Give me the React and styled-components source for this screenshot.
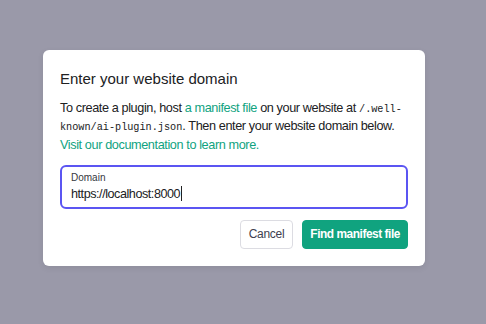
import React from "react"
import styled, { createGlobalStyle } from "styled-components"

const Global = createGlobalStyle`
body{
    margin:0;
    background:#9a99a9;
    font-family: "Liberation Sans", Arial, sans-serif;
}
`

const Page = styled.div`
width:486px;
height:324px;
box-sizing:border-box;
padding:50px 0 0 43px;
`

const Modal = styled.div`
width:382px;
box-sizing:border-box;
background:#fff;
border-radius:6px;
padding:20px 17px 17px 17px;
box-shadow:0 2px 6px rgba(0,0,0,0.08);
`

const Title = styled.h2`
margin:0;
font-size:15px;
line-height:18px;
font-weight:400;
color:#202123;
`

const Text = styled.p`
margin:12px 0 0;
font-size:12.7px;
line-height:17.3px;
letter-spacing:-0.4px;
color:#202123;
a{
    color:#10a37f;
    text-decoration:none;
}
code{
    font-family:"Liberation Mono", monospace;
    font-size:10.2px;
    letter-spacing:0;
}
`

const Field = styled.label`
display:flex;
flex-direction:column;
margin-top:11px;
border:2px solid #5b55f2;
border-radius:6px;
padding:4px 9px 4px;
span{
    font-size:10px;
    line-height:14px;
    color:#353740;
}
`

const Value = styled.div`
font-size:12.6px;
line-height:18px;
letter-spacing:-0.45px;
color:#202123;
display:flex;
align-items:center;
&::after{
    content:"";
    width:1px;
    height:15px;
    background:#202123;
    margin-left:1px;
}
`

const Actions = styled.div`
display:flex;
justify-content:flex-end;
gap:9px;
margin-top:11px;
`

const Button = styled.button`
height:29px;
padding:0 ${p => p.primary ? "7px" : "8px"};
border-radius:4px;
font-family:inherit;
font-size:${p => p.primary ? "11.9px" : "12px"};
letter-spacing:${p => p.primary ? "-0.45px" : "-0.3px"};
font-weight:${p => p.primary ? 700 : 400};
border:1px solid ${p => p.primary ? "#10a37f" : "#dcdce2"};
background:${p => p.primary ? "#10a37f" : "#fff"};
color:${p => p.primary ? "#fff" : "#40414f"};
`

export default function App(){
    return (
        <>
            <Global />
            <Page>
                <Modal>
                    <Title>Enter your website domain</Title>
                    <Text>
                        To create a plugin, host <a href="#">a manifest file</a> on your website at <code>/.well-known/ai-plugin.json</code>. Then enter your website domain below. <a href="#">Visit our documentation to learn more.</a>
                    </Text>
                    <Field>
                        <span>Domain</span>
                        <Value>https://localhost:8000</Value>
                    </Field>
                    <Actions>
                        <Button>Cancel</Button>
                        <Button primary>Find manifest file</Button>
                    </Actions>
                </Modal>
            </Page>
        </>
    )
}
